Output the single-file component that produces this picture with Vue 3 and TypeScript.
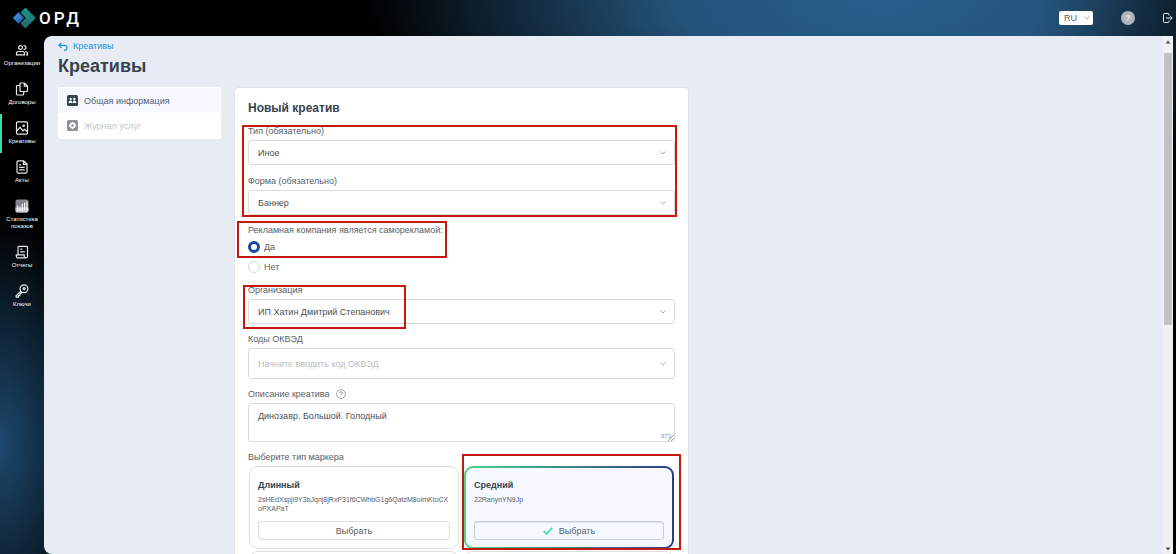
<script setup lang="ts">
import { ref } from 'vue'

interface NavItem {
  id: string
  label: string
  active?: boolean
}

interface Marker {
  id: string
  title: string
  code: string
}

const nav: NavItem[] = [
  { id: 'orgs', label: 'Организации' },
  { id: 'contracts', label: 'Договоры' },
  { id: 'creatives', label: 'Креативы', active: true },
  { id: 'acts', label: 'Акты' },
  { id: 'stats', label: 'Статистика показов' },
  { id: 'reports', label: 'Отчеты' },
  { id: 'keys', label: 'Ключи' },
]

const markers: Marker[] = [
  { id: 'long', title: 'Длинный', code: '2sHEdXspji9Y3bJqnj8jRxP31f6CWhbG1g6QatzM8oimKtoCXoPXAPaT' },
  { id: 'medium', title: 'Средний', code: '22RanynYN9Jp' },
]

const lang = ref('RU')
const kind = ref('Иное')
const form = ref('Баннер')
const selfPromo = ref('yes')
const organization = ref('ИП Хатин Дмитрий Степанович')
const okved = ref('')
const description = ref('Динозавр. Большой. Голодный')
const selected = ref('medium')
</script>

<template>
  <div class="shell">
    <header class="topbar">
      <a class="brand" href="#">
        <svg width="24" height="22" viewBox="0 0 24 22" aria-hidden="true">
          <defs>
            <linearGradient id="teal" x1="0" y1="0" x2="0" y2="1">
              <stop offset="0" stop-color="#0f9a94" />
              <stop offset="1" stop-color="#2b6663" />
            </linearGradient>
            <linearGradient id="azure" x1="0" y1="0" x2="1" y2="1">
              <stop offset="0" stop-color="#4fa3e8" />
              <stop offset="1" stop-color="#1d4fa0" />
            </linearGradient>
          </defs>
          <path d="M13.500 0.500 23.800 11 13.500 21.500 8.500 16.500l5.300-5.500L8.500 5.500z" fill="url(#teal)" />
          <path d="M6.500 5.300 12.200 11 6.500 16.700.8 11z" fill="url(#azure)" />
        </svg>
        <span>ОРД</span>
      </a>
      <div class="tools">
        <label class="lang">
          <select v-model="lang" aria-label="Язык">
            <option>RU</option>
          </select>
          <svg class="chev" width="6" height="4" viewBox="0 0 6 4"><path d="M.5.5 3 3 5.500.5" /></svg>
        </label>
        <button class="help" type="button" aria-label="Помощь">?</button>
        <button class="exit" type="button" aria-label="Выход">
          <svg width="10" height="10" viewBox="0 0 10 10" fill="none" stroke="#e4e9ee" stroke-width="1">
            <path d="M6 2.500V1.500a1 1 0 0 0-1-1H1.500a1 1 0 0 0-1 1v7a1 1 0 0 0 1 1H5a1 1 0 0 0 1-1v-1M3 5h6M7.300 3.200 9.200 5 7.300 6.800" />
          </svg>
        </button>
      </div>
    </header>

    <div class="body">
      <nav class="rail">
        <a v-for="item in nav" :key="item.id" href="#" :class="{ active: item.active }">
          <svg class="glyph" width="14" height="14" viewBox="0 0 14 14" aria-hidden="true">
            <g v-if="item.id === 'orgs'">
              <circle cx="5.500" cy="4.500" r="1.900" />
              <path d="M8.500 2.700a1.900 1.900 0 1 1 0 3.600M1.500 11.800V10.500Q1.500 8.500 3.800 8.500h3.400q2.300 0 2.300 2v1.300zM10.200 8.500q2.300.2 2.300 2v1.300h-1.500" />
            </g>
            <g v-else-if="item.id === 'contracts'">
              <path d="M5 9.500V2q0-1 1-1h3.500l3 3v4.500q0 1-1 1H6q-1 0-1-1zM9.300 1v3.200h3.200M4.800 3.500H2.500q-1 0-1 1V12q0 1 1 1h5.200q1 0 1-1V9.800" />
            </g>
            <g v-else-if="item.id === 'creatives'">
              <rect x="1.500" y=".8" width="11" height="12.400" rx="1.200" />
              <path d="M1.800 10.200 5 6.300l3 3.500 1.500-1.400 2.800 2.400" />
              <circle cx="8.700" cy="4.700" r=".7" />
            </g>
            <g v-else-if="item.id === 'acts'">
              <path d="M2 2q0-1.200 1.200-1.200h5.500L12 4v8q0 1.200-1.200 1.200H3.200Q2 13.200 2 12zM8.500 1v3.300h3.300M4.200 4.800h2M4.200 7.300h5.500M4.200 9.800h5.500" />
            </g>
            <g v-else-if="item.id === 'stats'" stroke="none">
              <rect x=".5" y=".5" width="13" height="13" rx="2" fill="#85878c" />
              <path d="M.5 8.500h13v3q0 2-2 2h-9q-2 0-2-2z" fill="#c9cbd0" />
              <path d="M2 6.500h1.200V12H2zM4.500 7.500h1.200V12H4.500zM6.800 5H8v7H6.800zM9 3.500h1.200V12H9zM11.400 2.500h1.200V12h-1.200z" fill="#f2f2f2" />
            </g>
            <g v-else-if="item.id === 'reports'">
              <path d="M3 9.500V2.300q0-1 1-1h7.500q1 0 1 1v9q0 1.500-1.500 1.500H2.500Q1.300 12.800 1.300 11V9.800h7.900v1.500q0 1.500 1.500 1.500M5.300 4.200h2M5.300 6.800h4.500" />
            </g>
            <g v-else>
              <circle cx="9" cy="4.800" r="3.900" />
              <circle cx="9.200" cy="4.600" r="1" />
              <path d="M6 7.300 1.200 11.500v1.700h2.200v-1.500h1.400v-1.500L7 8.300" />
            </g>
          </svg>
          <span>{{ item.label }}</span>
        </a>
      </nav>

      <main class="page">
        <div class="content">
          <a class="crumb" href="#">
            <svg width="10" height="9" viewBox="0 0 10 9" fill="none" stroke="#2196d6" stroke-width="1.200">
              <path d="M3.500.7.8 3.300 3.500 6M1 3.300h5.500q2.500 0 2.500 2.500T6.800 8.300H6" />
            </svg>
            Креативы
          </a>
          <h1>Креативы</h1>

          <div class="columns">
            <nav class="tabs">
              <a class="current" href="#">
                <svg width="11" height="11" viewBox="0 0 11 11">
                  <rect width="11" height="11" rx="1.500" fill="#36434f" />
                  <circle cx="3.700" cy="4" r="1.200" fill="#fff" />
                  <circle cx="7.300" cy="4" r="1.200" fill="#fff" />
                  <path d="M1.700 8V7q0-1.200 2-1.200T5.300 7v1zM5.800 8V7q0-1.200 1.600-1.200T9.300 7v1z" fill="#fff" />
                </svg>
                Общая информация
              </a>
              <a class="muted" href="#">
                <svg width="11" height="11" viewBox="0 0 11 11">
                  <rect width="11" height="11" rx="1.500" fill="#8d9299" />
                  <circle cx="5.500" cy="5.500" r="2.200" fill="none" stroke="#fff" stroke-width="1.600" />
                  <path d="M5.500 1.800v7.400M1.800 5.500h7.400M3 3l5 5M8 3 3 8" stroke="#fff" stroke-width="1" />
                  <circle cx="5.500" cy="5.500" r="1.200" fill="#8d9299" />
                </svg>
                Журнал услуг
              </a>
            </nav>

            <form class="card" @submit.prevent>
              <h2>Новый креатив</h2>
              <div class="fields">
                <div class="fields pair">
                  <div class="field">
                    <label for="kind">Тип (обязательно)</label>
                    <div class="control">
                      <select id="kind" v-model="kind"><option>Иное</option></select>
                      <svg class="chev" width="6" height="4" viewBox="0 0 6 4"><path d="M.5.5 3 3 5.500.5" /></svg>
                    </div>
                  </div>
                  <div class="field">
                    <label for="form">Форма (обязательно)</label>
                    <div class="control">
                      <select id="form" v-model="form"><option>Баннер</option></select>
                      <svg class="chev" width="6" height="4" viewBox="0 0 6 4"><path d="M.5.5 3 3 5.500.5" /></svg>
                    </div>
                  </div>
                  <i class="mark mark-type"></i>
                </div>

                <fieldset>
                  <legend>Рекламная компания является саморекламой:</legend>
                  <label class="radio"><input v-model="selfPromo" type="radio" name="self" value="yes" />Да</label>
                  <label class="radio"><input v-model="selfPromo" type="radio" name="self" value="no" />Нет</label>
                  <i class="mark mark-self"></i>
                </fieldset>

                <div class="field">
                  <label for="org">Организация</label>
                  <div class="control">
                    <select id="org" v-model="organization"><option>ИП Хатин Дмитрий Степанович</option></select>
                    <svg class="chev" width="6" height="4" viewBox="0 0 6 4"><path d="M.5.5 3 3 5.500.5" /></svg>
                  </div>
                  <i class="mark mark-org"></i>
                </div>

                <div class="field">
                  <label for="okved">Коды ОКВЭД</label>
                  <div class="control tall">
                    <input id="okved" v-model="okved" type="text" placeholder="Начните вводить код ОКВЭД" />
                    <svg class="chev" width="6" height="4" viewBox="0 0 6 4"><path d="M.5.5 3 3 5.500.5" /></svg>
                  </div>
                </div>

                <div class="field">
                  <label for="desc">
                    Описание креатива
                    <svg class="hint" width="10" height="10" viewBox="0 0 10 10" fill="none" stroke="#858b92" stroke-width=".8">
                      <circle cx="5" cy="5" r="4.400" />
                      <path d="M3.700 4q0-1.300 1.300-1.300T6.300 4q0 .8-1.300 1.300v.7M5 6.900v.8" />
                    </svg>
                  </label>
                  <div class="control area">
                    <textarea id="desc" v-model="description"></textarea>
                    <span class="count">973</span>
                    <svg class="grip" width="6" height="6" viewBox="0 0 6 6"><path d="M0 6 6 0M3 6l3-3" stroke="#777" stroke-width=".7" /></svg>
                  </div>
                </div>

                <div class="field">
                  <p class="caption">Выберите тип маркера</p>
                  <div class="markers">
                    <section v-for="m in markers" :key="m.id" class="marker" :class="{ chosen: m.id === selected }">
                      <h3>{{ m.title }}</h3>
                      <p>{{ m.code }}</p>
                      <button type="button" @click="selected = m.id">
                        <svg v-if="m.id === selected" width="10" height="8" viewBox="0 0 10 8" fill="none" stroke="#3ddcae" stroke-width="1.600">
                          <path d="M.7 4 3.500 6.800 9.300.8" />
                        </svg>
                        Выбрать
                      </button>
                      <i v-if="m.id === 'medium'" class="mark mark-marker"></i>
                    </section>
                    <section class="marker next"></section>
                    <section class="marker next"></section>
                  </div>
                </div>
              </div>
            </form>
          </div>
        </div>

        <div class="scroll" aria-hidden="true">
          <svg width="6" height="4" viewBox="0 0 6 4"><path d="M.5 3.500 3 .5l2.500 3z" fill="#505050" /></svg>
          <div class="track"><div class="thumb"></div></div>
          <svg width="6" height="4" viewBox="0 0 6 4"><path d="M.5.5 3 3.500 5.500.5z" fill="#505050" /></svg>
        </div>
      </main>
    </div>
  </div>
</template>

<style>
body {
  margin: 0;
  background: #000;
}
</style>

<style scoped>
.shell {
  display: flex;
  flex-direction: column;
  height: 100vh;
  overflow: hidden;
  color: #56606a;
  font: 9px/12px 'Liberation Sans', Arial, sans-serif;
  background:
    linear-gradient(90deg, transparent 88%, rgba(0, 0, 0, 0.45)),
    radial-gradient(ellipse 110px 230px at 0 445px, #1d496d, transparent),
    radial-gradient(ellipse 44% 190px at 75% 0, #27608c, #245379 40%, transparent),
    #000;
}
.shell *,
.shell *::before {
  box-sizing: border-box;
}
a {
  color: inherit;
  text-decoration: none;
}
h1, h2, h3, p {
  margin: 0;
}
button, select, input, textarea {
  margin: 0;
  padding: 0;
  border: 0;
  background: none;
  color: inherit;
  font: inherit;
  outline: 0;
}
select {
  appearance: none;
}
svg {
  display: block;
  flex: none;
}
.chev {
  position: absolute;
  right: 8px;
  top: 50%;
  margin-top: -2px;
  fill: none;
  stroke: #a9adb2;
  pointer-events: none;
}

.topbar {
  display: flex;
  flex: none;
  align-items: center;
  justify-content: space-between;
  height: 36px;
  padding: 0 3px 0 12px;
}
.brand {
  display: flex;
  align-items: center;
  gap: 3px;
  color: #fff;
  font-family: Roboto, sans-serif;
  font-size: 17px;
  font-weight: 500;
  line-height: 20px;
  letter-spacing: 3px;
}
.tools {
  display: flex;
  align-items: center;
}
.lang {
  position: relative;
  width: 34px;
  height: 14px;
  margin-right: 28px;
  border-radius: 2px;
  background: #fff;
}
.lang select {
  display: block;
  width: 100%;
  height: 14px;
  padding-left: 5px;
}
.lang .chev {
  right: 3px;
}
.help {
  width: 14px;
  height: 14px;
  margin-right: 28px;
  border-radius: 50%;
  background: #b1b6bd;
  color: #e8eaed;
  font-weight: bold;
}

.body {
  display: flex;
  flex: 1;
  min-height: 0;
}
.rail {
  flex: none;
  width: 44px;
}
.rail a {
  display: flex;
  flex-direction: column;
  align-items: center;
  gap: 3px;
  min-height: 39px;
  padding: 7px 4px 8px 2px;
  border-left: 2px solid transparent;
  color: #fff;
  font-size: 6px;
  line-height: 7px;
  text-align: center;
}
.rail a.active {
  border-left-color: #3ddcae;
}
.glyph {
  fill: none;
  stroke: #e6e8ea;
  stroke-width: 1.2;
}
.page {
  display: flex;
  flex: 1;
  min-width: 0;
  margin-right: 3px;
  overflow: hidden;
  border-radius: 8px 0 0 8px;
  background: #e7ebf3;
}
.content {
  flex: 1;
  min-width: 0;
  padding: 4px 14px 0;
}
.crumb {
  display: flex;
  align-items: center;
  gap: 5px;
  color: #2196d6;
}
h1 {
  margin: 3px 0 10px;
  color: #36434f;
  font-size: 18px;
  line-height: 22px;
}
.columns {
  display: flex;
  align-items: flex-start;
  gap: 13px;
}
.tabs {
  flex: none;
  width: 163px;
  padding: 1px;
  border-radius: 3px;
  background: #fff;
}
.tabs a {
  display: flex;
  align-items: center;
  gap: 6px;
  height: 25px;
  padding-left: 8px;
}
.tabs .current {
  background: #f5f9ff;
}
.tabs .muted {
  color: #c3c6ca;
}
.card {
  flex: 0 1 455px;
  padding: 12px 13px;
  border: 1px solid #dfe2e7;
  border-radius: 4px;
  background: #fff;
}
h2 {
  margin-bottom: 9px;
  color: #36434f;
  font-size: 12px;
  line-height: 16px;
}
.fields {
  position: relative;
  display: flex;
  flex-direction: column;
  gap: 9px;
}
.pair {
  gap: 10px;
}
.field {
  position: relative;
  display: flex;
  flex-direction: column;
  gap: 3px;
}
.field > label {
  display: flex;
  gap: 6px;
  align-items: center;
}
.control {
  position: relative;
  height: 25px;
  border: 1px solid #d9dbde;
  border-radius: 3px;
  background: #fff;
  color: #4a4f55;
}
.tall {
  height: 31px;
}
.area {
  height: 39px;
}
.control select,
.control input {
  display: block;
  width: 100%;
  height: 100%;
  padding: 0 24px 0 9px;
}
.control input::placeholder {
  color: #b9bcc0;
  opacity: 1;
}
.control textarea {
  display: block;
  width: 100%;
  height: 100%;
  padding: 6px 9px;
  resize: none;
}
.count {
  position: absolute;
  right: 3px;
  bottom: 1px;
  color: #8b9096;
  font-size: 6px;
  line-height: 8px;
}
.grip {
  position: absolute;
  right: 0;
  bottom: 0;
}
fieldset {
  position: relative;
  display: flex;
  flex-direction: column;
  gap: 8px;
  min-width: 0;
  margin: 0;
  padding: 0 0 2px;
  border: 0;
}
legend {
  margin-bottom: 5px;
  padding: 0;
}
.radio {
  display: flex;
  align-items: center;
  gap: 4px;
}
.radio input {
  appearance: none;
  width: 12px;
  height: 12px;
  border: 1px solid #d3d6da;
  border-radius: 50%;
  background: #fff;
}
.radio input:checked {
  border: 3px solid #18489c;
}
.markers {
  display: grid;
  grid-template-columns: 1fr 1fr;
  gap: 2px 5px;
  padding: 0 1px;
}
.marker {
  position: relative;
  display: flex;
  flex-direction: column;
  height: 83px;
  padding: 11px 8px 8px;
  border: 1px solid #dcdee1;
  border-radius: 9px;
}
.marker h3 {
  color: #36434f;
  font-size: 9px;
  line-height: 14px;
}
.marker p {
  margin-top: 3px;
  font-size: 7px;
  line-height: 9px;
  word-break: break-all;
}
.marker button {
  display: flex;
  align-items: center;
  justify-content: center;
  gap: 6px;
  height: 19px;
  margin-top: auto;
  border: 1px solid #dcdee1;
  border-radius: 3px;
}
.marker.chosen {
  border: 2px solid transparent;
  padding: 10px 8px 7px;
  background:
    linear-gradient(#f5f9ff, #f5f9ff) padding-box,
    linear-gradient(90deg, #4bd68a, #2d3a86) border-box;
}
.marker.chosen button {
  border-color: #c9cfd6;
  box-shadow: inset 0 1px 1px #dde2e8;
}

.mark {
  position: absolute;
  z-index: 1;
  border: 2px solid #c4190c;
  pointer-events: none;
}
.mark-type {
  inset: 0 -2px -2px -6px;
}
.mark-self {
  top: -20px;
  left: -11px;
  width: 210px;
  height: 37px;
}
.mark-org {
  top: 1px;
  left: -5px;
  width: 163px;
  height: 44px;
}
.mark-marker {
  inset: -14px -9px -3px -4px;
}

.scroll {
  display: flex;
  flex: none;
  flex-direction: column;
  align-items: center;
  gap: 9px;
  width: 10px;
  padding: 4px 0 3px;
  background: #f1f1f1;
}
.track {
  flex: 1;
  width: 8px;
}
.thumb {
  height: 56%;
  background: #c1c1c1;
}
</style>
